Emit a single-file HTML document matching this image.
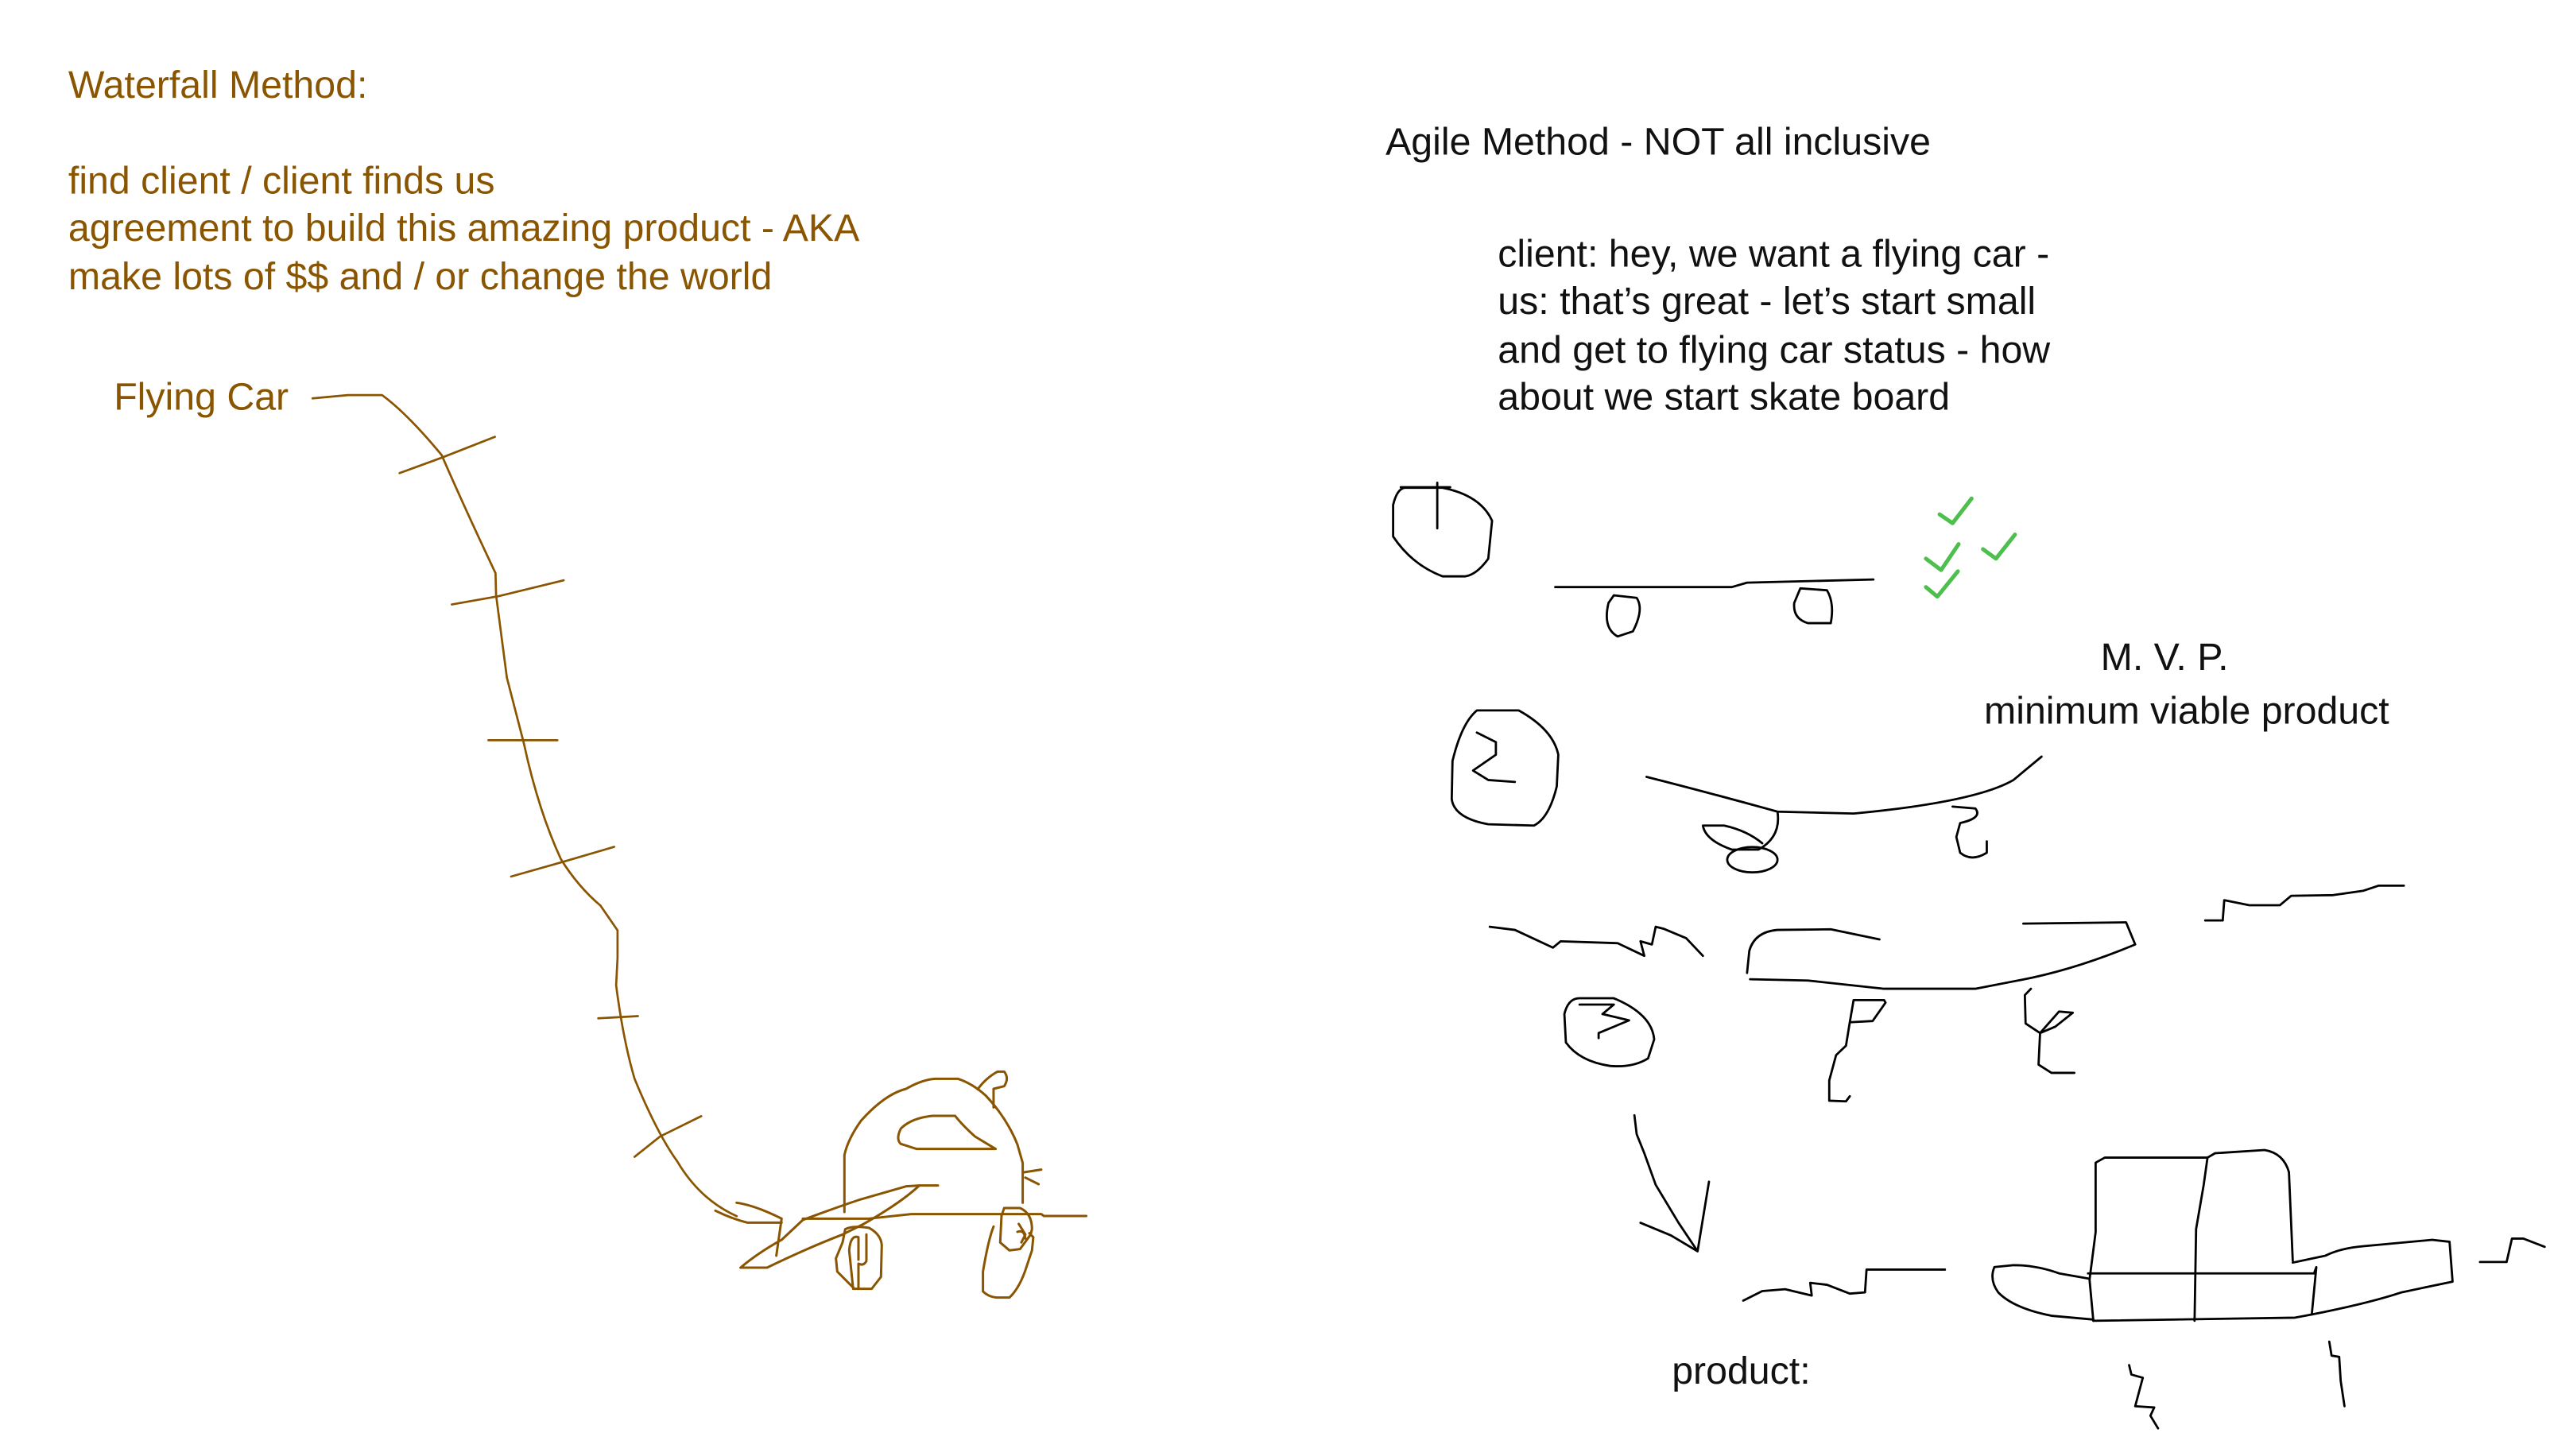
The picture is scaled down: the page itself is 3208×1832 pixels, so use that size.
<!DOCTYPE html>
<html><head><meta charset="utf-8"><style>
html,body{margin:0;padding:0;background:#fff;overflow:hidden;}
svg{display:block;}
</style></head><body>
<svg width="3208" height="1832" viewBox="0 0 1568 895.4" xmlns="http://www.w3.org/2000/svg">
<rect width="1568" height="895.4" fill="#fff"/>
<g font-family="Liberation Sans, sans-serif" font-size="23.6" fill="#8a5500">
<text x="42" y="60">Waterfall Method:</text>
<text x="42" y="119">find client / client finds us</text>
<text x="42" y="148">agreement to build this amazing product - AKA</text>
<text x="42" y="178">make lots of $$ and / or change the world</text>
<text x="70" y="252">Flying Car</text>
</g>
<g font-family="Liberation Sans, sans-serif" font-size="23.6" fill="#111">
<text x="852" y="95">Agile Method - NOT all inclusive</text>
<text x="921" y="164">client:  hey, we want a flying car -</text>
<text x="921" y="193">us: that’s great - let’s start small</text>
<text x="921" y="223">and get to flying car status - how</text>
<text x="921" y="252">about we start skate board</text>
<text x="1331" y="412" text-anchor="middle">M. V. P.</text>
<text x="1220" y="445">minimum viable product</text>
<text x="1028" y="851">product:</text>
</g>
<!-- waterfall path -->
<g transform="translate(180.8,227.4) scale(0.1745,0.338)" fill="none" stroke="#8a5500" stroke-width="2.7" vector-effect="non-scaling-stroke" stroke-linejoin="round" stroke-linecap="round">
<path vector-effect="non-scaling-stroke" d="M65,52 L190,46 L310,46 Q400,80 520,155 Q600,250 710,370 L712,410 Q730,480 750,560 Q790,640 810,680 Q860,800 940,890 Q1000,940 1080,975 L1140,1020 L1140,1070 L1135,1120 Q1160,1220 1200,1290 Q1280,1390 1350,1440 Q1430,1510 1560,1540"/>
<path vector-effect="non-scaling-stroke" d="M372,188 L520,160 L708,122 M556,427 L720,412 L950,383 M685,674 L928,674 M765,922 L950,895 L1128,868 M1072,1180 L1212,1176 M1200,1432 L1290,1395 L1435,1358"/>
</g>
<!-- car -->
<g transform="translate(439.9,635.4) scale(0.1629)" fill="none" stroke="#8a5500" stroke-width="9" stroke-linejoin="round" stroke-linecap="round">
<path d="M487,675 L487,460 Q500,400 550,330 Q640,230 720,210 Q780,175 830,172 L915,172 Q970,190 1020,235 Q1100,320 1140,420 L1160,490 L1160,640"/>
<path d="M760,437 L1058,437 L980,390 Q930,345 905,312 L820,312 Q740,320 700,360 Q680,400 700,418 Z"/>
<path d="M990,212 Q1020,170 1065,145 L1090,145 Q1110,170 1090,200 L1050,210 L1050,280"/>
<path d="M1165,525 L1230,515 M1170,545 L1220,570"/>
<path d="M0,670 Q60,700 120,715 L250,715 M330,700 L580,700 L740,683 L1230,683 L1240,690 L1400,690"/>
<path d="M80,640 Q150,650 250,700 L230,840"/>
<path d="M95,885 L195,885 Q350,810 480,760 L560,720 Q700,640 770,575 L840,575"/>
<path d="M95,885 Q160,830 250,780 L330,705 Q450,660 540,630 L720,578 L770,575"/>
<path d="M460,900 L455,850 L480,790 L490,740 Q520,725 580,735 Q625,760 628,800 L625,920 L590,965 L525,965 Z"/>
<path d="M520,965 L505,820 Q510,760 540,770 L540,855 M540,965 L540,870 Q560,880 570,860 L570,760"/>
<path d="M1050,730 Q1030,780 1010,900 L1010,975 Q1030,995 1060,998 L1110,998 Q1150,960 1175,880 L1195,820 L1200,770 L1185,755"/>
<path d="M1090,660 L1150,660 Q1195,680 1195,740 L1190,760 L1150,815 L1110,820 L1075,790 L1080,690 Z"/>
<path d="M1145,720 L1170,760 L1155,790 M1140,750 Q1165,740 1170,775"/>
</g>
<!-- agile drawings -->
<g transform="translate(830.9,281.3) scale(0.468,0.389)" fill="none" stroke="#000" stroke-linejoin="round" stroke-linecap="round">
<g stroke-width="2.8">
<path vector-effect="non-scaling-stroke" d="M70,48 L120,48 Q170,60 185,100 L180,160 Q165,185 150,188 L120,188 Q80,170 55,125 L55,75 Q60,50 70,48 Z"/>
<path vector-effect="non-scaling-stroke" d="M113,40 L113,112 M65,47 L130,47"/>
<path vector-effect="non-scaling-stroke" d="M268,205 L500,205 L520,198 L686,193"/>
<path vector-effect="non-scaling-stroke" d="M345,218 L375,222 Q385,240 370,275 L350,283 Q330,270 338,230 Z"/>
<path vector-effect="non-scaling-stroke" d="M590,207 L625,210 Q635,230 630,262 L600,262 Q580,255 582,230 Z"/>
<path vector-effect="non-scaling-stroke" d="M165,400 L220,400 Q265,430 272,470 L270,520 Q260,570 240,582 L180,580 Q135,570 132,540 L133,480 Q145,420 165,400 Z"/>
<path vector-effect="non-scaling-stroke" d="M165,435 L190,450 L190,470 L160,495 L180,510 L215,513"/>
<path vector-effect="non-scaling-stroke" d="M388,505 Q470,530 560,560 L660,563 Q820,545 870,510 L907,473"/>
<path vector-effect="non-scaling-stroke" d="M560,560 Q565,600 535,620 L500,620 Q465,605 462,582 L490,582 Q520,590 540,610"/>
<ellipse vector-effect="non-scaling-stroke" cx="527" cy="636" rx="33" ry="20"/>
<path vector-effect="non-scaling-stroke" d="M790,552 L820,555 Q830,570 800,578 L795,600 L800,625 Q815,640 835,625 L835,607"/>
<path vector-effect="non-scaling-stroke" d="M182,742 L215,747 L265,775 L275,765 L350,768 L385,788 L380,765 L395,770 L400,742 L410,745 L440,760 L462,788"/>
<path vector-effect="non-scaling-stroke" d="M520,815 L523,780 Q530,750 560,747 L630,746 L694,762"/>
<path vector-effect="non-scaling-stroke" d="M524,825 L600,827 L700,840 L820,840 L880,826 Q950,810 1030,770 L1018,735 L883,737"/>
<path vector-effect="non-scaling-stroke" d="M300,855 L345,855 Q395,880 398,920 L390,950 Q370,965 340,962 Q300,955 282,925 L280,880 Q285,855 300,855 Z"/>
<path vector-effect="non-scaling-stroke" d="M300,865 L345,865 L330,880 L365,890 L325,910 L325,918"/>
<path vector-effect="non-scaling-stroke" d="M700,858 L660,858 L655,893 L685,891 L702,862 Z M655,893 L650,930 L637,945 L628,985 L628,1017 L650,1018 L655,1010"/>
<path vector-effect="non-scaling-stroke" d="M893,840 L885,850 L886,895 L905,910 L925,900 L948,878 L930,876 L905,910 L903,960 L920,973 L950,973"/>
<path vector-effect="non-scaling-stroke" d="M1122,732 L1145,732 L1147,700 L1180,708 L1220,708 L1235,693 L1290,692 L1330,685 L1350,677 L1383,677"/>
<path vector-effect="non-scaling-stroke" d="M372,1040 L375,1070 L385,1100 L400,1150 L430,1210 L455,1255 L470,1145 M380,1210 L420,1230 L455,1255"/>
<path vector-effect="non-scaling-stroke" d="M515,1333 L540,1318 L570,1315 L605,1325 L603,1305 L625,1308 L655,1322 L675,1320 L677,1284 L780,1284"/>
<path vector-effect="non-scaling-stroke" d="M975,1365 L970,1300 L978,1225 L978,1115 L990,1107 L1125,1107 L1135,1100 L1200,1095 Q1225,1100 1232,1130 L1237,1270"/>
<path vector-effect="non-scaling-stroke" d="M1125,1107 L1120,1150 L1110,1220 L1108,1365"/>
<path vector-effect="non-scaling-stroke" d="M968,1290 L1265,1290 L1268,1280 L1262,1355"/>
<path vector-effect="non-scaling-stroke" d="M975,1365 L1240,1360 Q1330,1340 1380,1320 L1447,1303 L1443,1240 L1420,1237 L1330,1247 Q1300,1250 1280,1262 L1237,1273"/>
<path vector-effect="non-scaling-stroke" d="M968,1298 L930,1290 Q900,1277 870,1277 L845,1280 Q838,1300 850,1320 Q870,1345 920,1357 L975,1363"/>
<path vector-effect="non-scaling-stroke" d="M1483,1272 L1518,1272 L1525,1235 L1540,1235 L1568,1248"/>
<path vector-effect="non-scaling-stroke" d="M1022,1435 L1025,1450 L1040,1455 L1030,1500 L1055,1502 L1050,1515 L1060,1535"/>
<path vector-effect="non-scaling-stroke" d="M1285,1398 L1288,1420 L1298,1422 L1300,1460 L1305,1500"/>
</g>
<g stroke="#4cbf4c" stroke-width="5">
<path vector-effect="non-scaling-stroke" d="M773,90 L790,104 L815,65"/>
<path vector-effect="non-scaling-stroke" d="M755,160 L775,178 L798,137"/>
<path vector-effect="non-scaling-stroke" d="M830,145 L847,160 L872,122"/>
<path vector-effect="non-scaling-stroke" d="M755,205 L770,220 L797,180"/>
</g>
</g>
</svg>
</body></html>
